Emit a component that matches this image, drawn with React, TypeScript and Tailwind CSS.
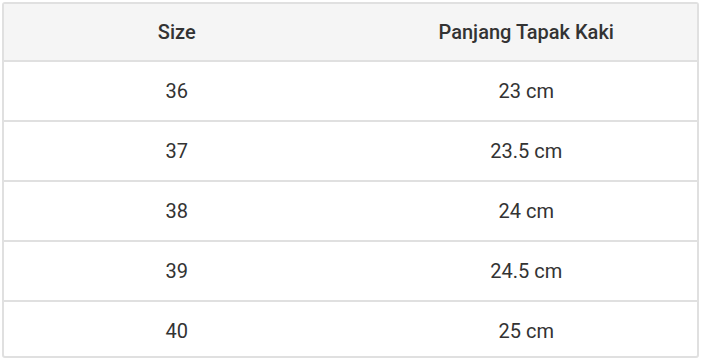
import React from "react";

const rows = [
  ["36", "23 cm"],
  ["37", "23.5 cm"],
  ["38", "24 cm"],
  ["39", "24.5 cm"],
  ["40", "25 cm"],
];

export default function App() {
  return (
    <div className="w-[702px] h-[360px] bg-white p-[2px] pr-[3px]" style={{ fontFamily: "Roboto, sans-serif" }}>
      <div className="border-2 border-[#e0e0e0] rounded-[3px] overflow-hidden text-[#333] text-[20px]">
        <div className="grid grid-cols-2 h-[56px] bg-[#f5f5f5] font-medium items-center text-center">
          <div className="pr-[1px]">Size</div>
          <div className="pl-[5px]">Panjang Tapak Kaki</div>
        </div>
        {rows.map((r, i) => (
          <div
            key={i}
            className={`grid grid-cols-2 border-t-2 border-[#e0e0e0] items-center text-center ${i === rows.length - 1 ? "h-[56px] pt-[3px]" : "h-[60px]"}`}
          >
            <div className="pr-[1px]">{r[0]}</div>
            <div className="pl-[5px]">{r[1]}</div>
          </div>
        ))}
      </div>
    </div>
  );
}
